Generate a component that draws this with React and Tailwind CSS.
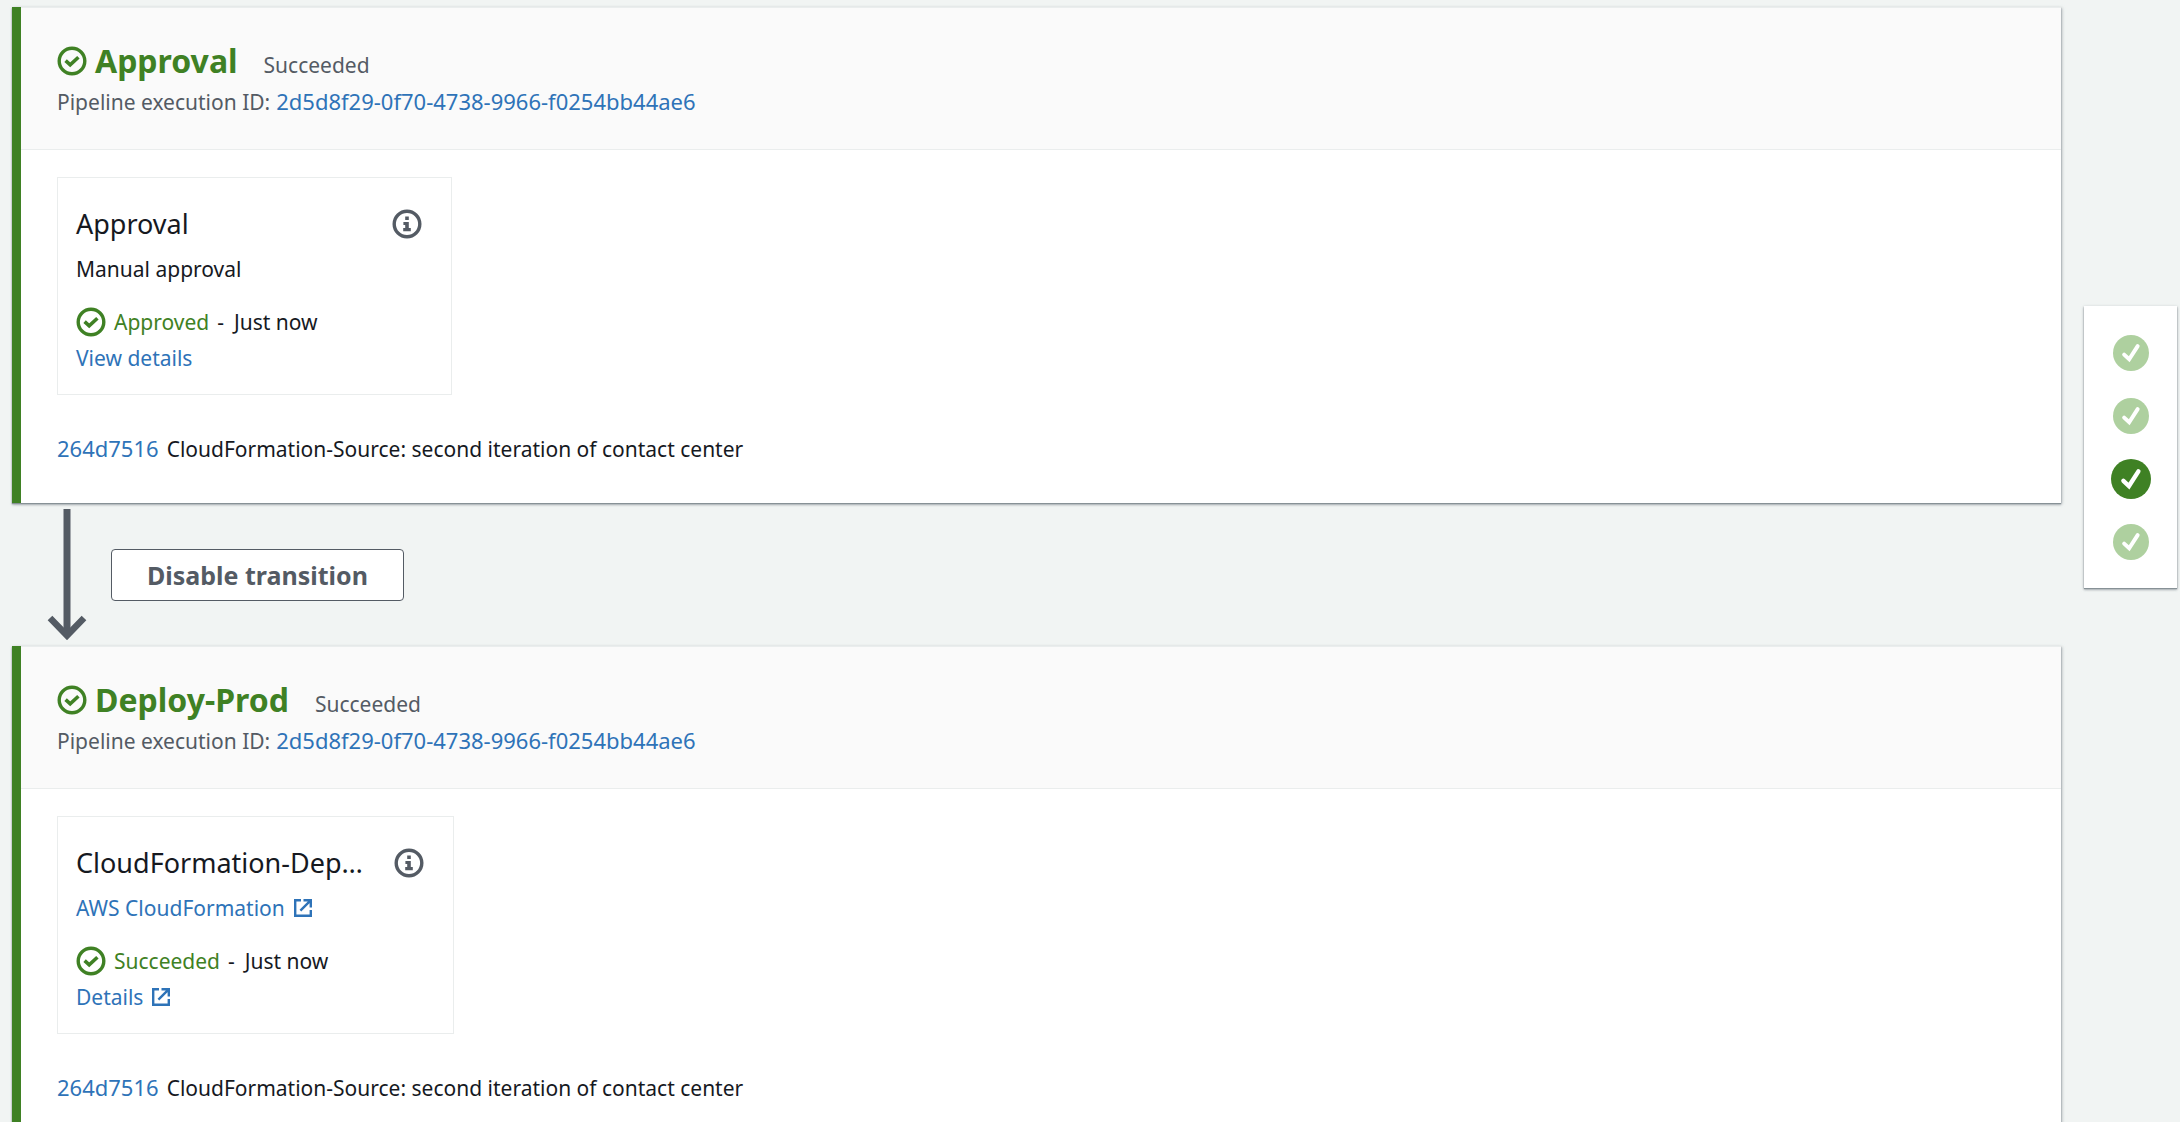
const stages = [
  {
    name: "Approval",
    action: {
      title: "Approval",
      provider: "Manual approval",
      status: "Approved",
      details: "View details",
      external: false,
    },
  },
  {
    name: "Deploy-Prod",
    action: {
      title: "CloudFormation-Dep…",
      provider: "AWS CloudFormation",
      status: "Succeeded",
      details: "Details",
      external: true,
    },
  },
];

const executionId = "2d5d8f29-0f70-4738-9966-f0254bb44ae6";

function SuccessIcon() {
  return (
    <svg viewBox="0 0 30 30" className="size-[30px] shrink-0" fill="none" stroke="currentColor" aria-hidden="true">
      <circle cx="15" cy="15" r="12.8" strokeWidth="3.4" />
      <path d="M8.6 14.6l4.6 4.2 8.2-7.6" strokeWidth="3.6" />
    </svg>
  );
}

function InfoIcon() {
  return (
    <svg viewBox="0 0 30 30" className="size-[30px]" aria-hidden="true">
      <circle cx="15" cy="15" r="12.8" fill="none" stroke="currentColor" strokeWidth="3.4" />
      <path fill="currentColor" d="M13.2 7.6h3.6v3.4h-3.6zM11.4 12.9h5.4v6h2v3.3h-7.6v-3.3h2v-2.8h-1.8z" />
    </svg>
  );
}

function ExternalIcon() {
  return (
    <svg viewBox="0 0 20 20" className="size-5" fill="none" stroke="currentColor" strokeWidth="2.4" aria-hidden="true">
      <path d="M8 2.2H2.2v15.6h15.6V12" />
      <path d="M10.5 2.2h7.3v7.3M17.4 2.6L7.4 12.6" />
    </svg>
  );
}

function StepIcon({ active }) {
  return (
    <svg
      viewBox="0 0 40 40"
      className={active ? "size-10 text-[#3f8124]" : "size-9 text-[#aed09f]"}
      aria-hidden="true"
    >
      <circle cx="20" cy="20" r="20" fill="currentColor" />
      <path d="M12.4 21.8l5.6 5.2 9.4-14.6" fill="none" stroke="#fff" strokeWidth="4.4" strokeLinecap="round" />
    </svg>
  );
}

function ActionCard({ action }) {
  return (
    <div
      className={`flex flex-col border border-[#eaeded] pt-[23px] pr-[29px] pb-[21px] pl-[18px] ${
        action.external ? "w-[397px]" : "w-[395px]"
      }`}
    >
      <div className="flex h-[45px] items-center justify-between gap-6">
        <h3 className="text-[27px] leading-[36px] whitespace-nowrap">{action.title}</h3>
        <button type="button" aria-label="Action information" className="text-[#545b64]">
          <InfoIcon />
        </button>
      </div>
      <div className="flex h-[45px] items-center gap-2">
        {action.external ? (
          <a href="#provider" className="flex items-center gap-2 text-[#2e73b8]">
            {action.provider}
            <ExternalIcon />
          </a>
        ) : (
          action.provider
        )}
      </div>
      <div className="mt-[10px] flex h-[42px] items-center">
        <span className="flex items-center gap-2 text-[#3f8124]">
          <SuccessIcon />
          {action.status}
        </span>
        <span className="pr-[10px] pl-2">-</span>
        <span>Just now</span>
      </div>
      <div className="flex h-[30px] items-center">
        <a href="#details" className="flex items-center gap-2 text-[#2e73b8]">
          {action.details}
          {action.external && <ExternalIcon />}
        </a>
      </div>
    </div>
  );
}

function Stage({ stage }) {
  return (
    <section className="border-l-9 border-[#3f8124] bg-white shadow-[0_1px_1px_#879196,1px_1px_3px_#87919699,0_2px_2px_#87919666]">
      <header className="border-y border-[#eaeded] bg-[#fafafa] px-9 pt-8 pb-[29px] text-[#545b64]">
        <div className="flex items-baseline gap-[26px]">
          <h2 className="flex items-center gap-2 text-[32px] leading-[42px] font-bold text-[#3f8124]">
            <SuccessIcon />
            <span className="self-baseline">{stage.name}</span>
          </h2>
          <span>Succeeded</span>
        </div>
        <p className="flex items-baseline gap-[6px]">
          Pipeline execution ID:
          <a href="#execution" className="text-[22px] text-[#2e73b8]">{executionId}</a>
        </p>
      </header>
      <div className="px-9 pt-[27px] pb-9">
        <ActionCard action={stage.action} />
        <p className="mt-[35px] flex items-baseline gap-2">
          <a href="#commit" className="text-[22px] text-[#2e73b8]">264d7516</a>
          CloudFormation-Source: second iteration of contact center
        </p>
      </div>
    </section>
  );
}

function Transition() {
  return (
    <div className="flex h-[143px] items-center gap-6 pl-[35px]">
      <svg viewBox="0 0 40 132" className="h-[132px] w-10 text-[#545b64]" fill="none" stroke="currentColor" aria-hidden="true">
        <path d="M20 0v126" strokeWidth="7" />
        <path d="M3 109l17 17.5L37 109" strokeWidth="6.5" />
      </svg>
      <button
        type="button"
        className="rounded border border-[#545b64] bg-white px-[35px] py-[7px] text-[25px] leading-[36px] font-bold text-[#545b64]"
      >
        Disable transition
      </button>
    </div>
  );
}

export default function App() {
  return (
    <div className="flex h-screen gap-[23px] overflow-hidden bg-[#f1f4f3] pt-[7px] pr-[3px] pl-3 font-['Noto_Sans',sans-serif] text-[21px] leading-[36px] text-[#16191f]">
      <main className="min-w-0 flex-1">
        <Stage stage={stages[0]} />
        <Transition />
        <Stage stage={stages[1]} />
      </main>
      <nav
        aria-label="Pipeline stages"
        className="mt-[299px] flex w-[93px] shrink-0 flex-col items-center self-start bg-white py-[15px] shadow-[0_1px_1px_#879196,0_1px_3px_#87919699,0_2px_2px_#87919666]"
      >
        {["Source", "Build", "Approval", "Deploy-Prod"].map((name) => (
          <button key={name} type="button" aria-label={name} className="flex h-[63px] items-center">
            <StepIcon active={name === "Approval"} />
          </button>
        ))}
      </nav>
    </div>
  );
}
